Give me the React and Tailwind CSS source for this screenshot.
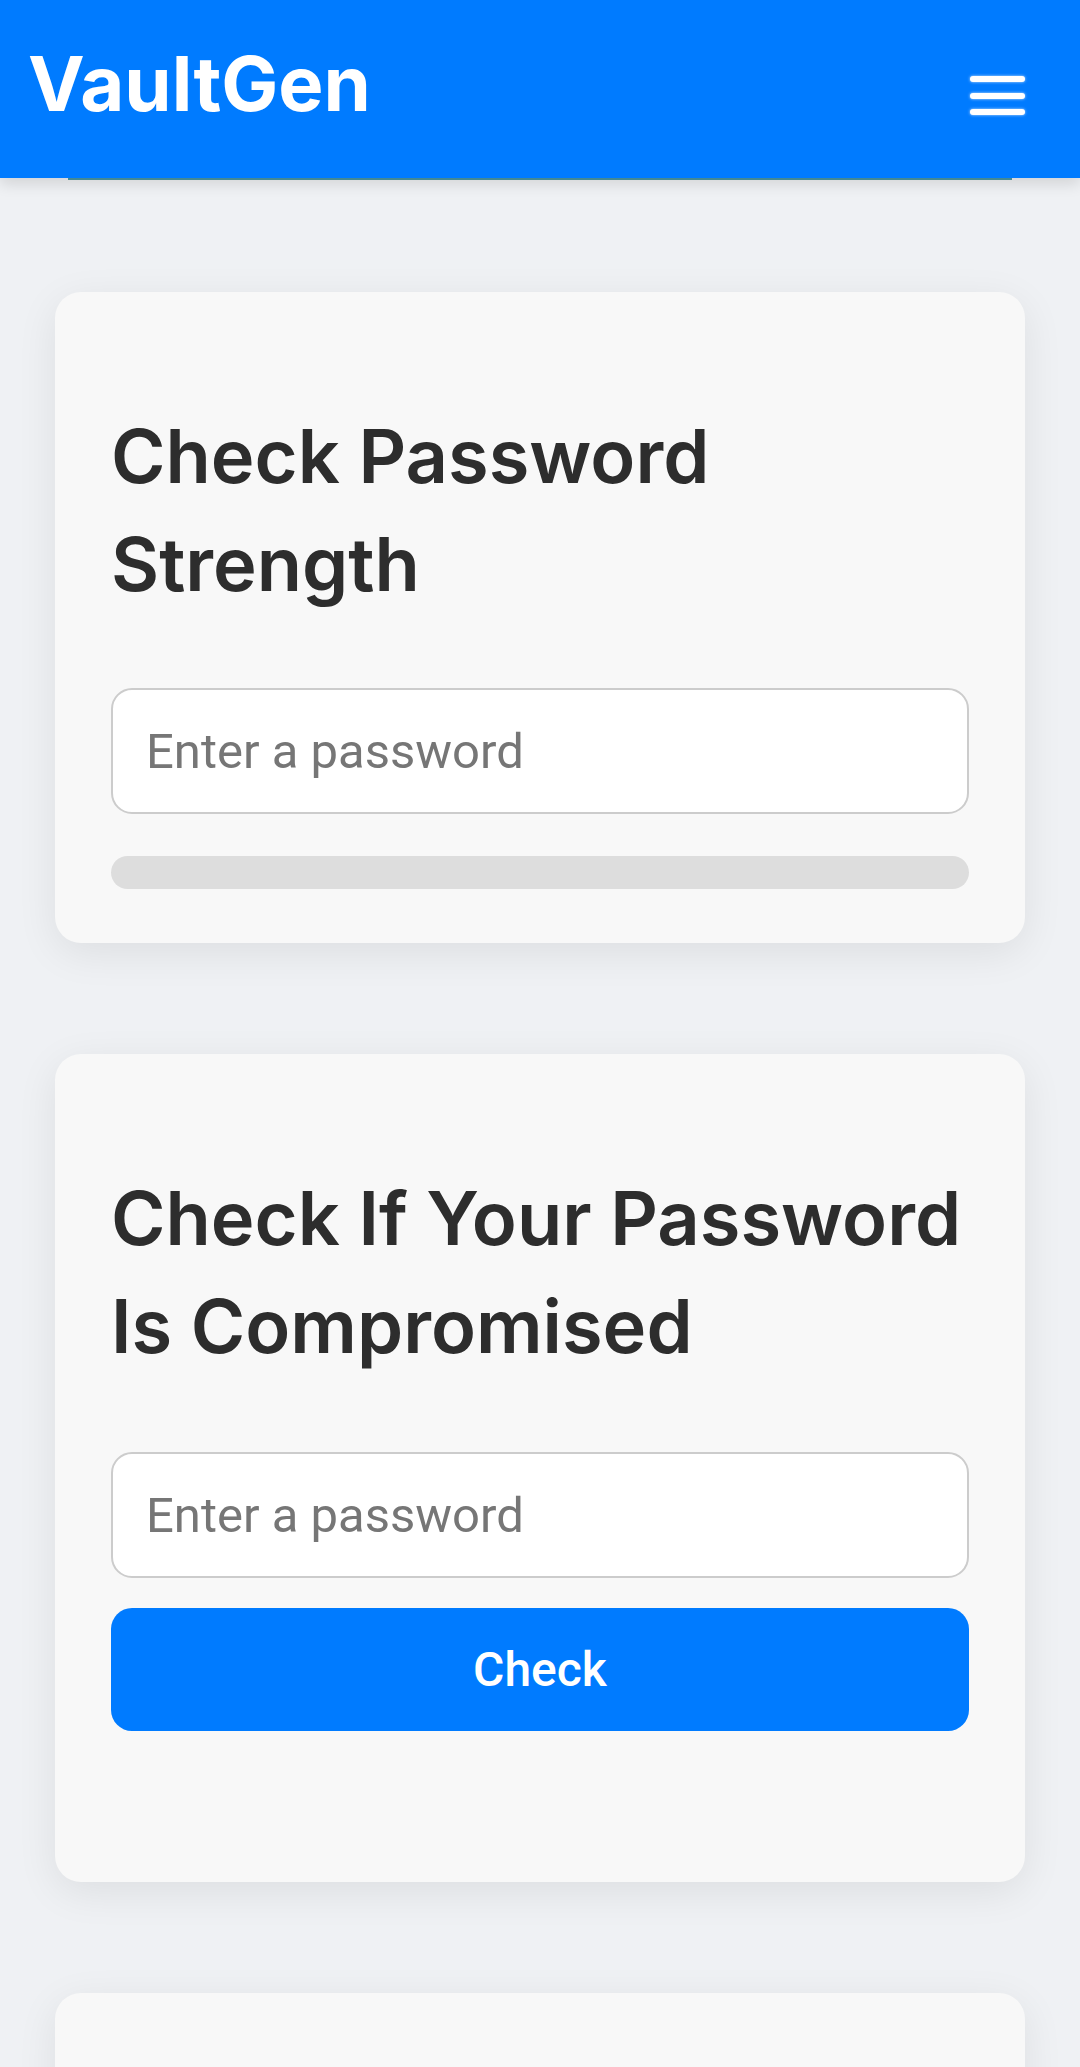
import React from "react";

function Card({ children, className = "" }) {
  return (
    <div
      className={
        "rounded-[26px] bg-[#f8f8f8] px-[56px] shadow-[0_10px_40px_rgba(0,0,0,0.08)] " +
        className
      }
    >
      {children}
    </div>
  );
}

function Heading({ children }) {
  return (
    <h2
      className="text-[74px] leading-[108px] font-semibold text-[#2d2d2d]"
      style={{ fontFamily: "Inter, 'Noto Sans', sans-serif" }}
    >
      {children}
    </h2>
  );
}

function PasswordInput({ className = "" }) {
  return (
    <input
      type="password"
      placeholder="Enter a password"
      className={
        "block w-full h-[126px] rounded-[21px] border-2 border-[#cccccc] bg-white pl-[33px] text-[49px] text-[#333] placeholder:text-[#767676] outline-none " +
        className
      }
      style={{ fontFamily: "Roboto, 'Noto Sans', sans-serif" }}
    />
  );
}

export default function App() {
  return (
    <div className="min-h-screen bg-[#eff1f4]">
      <header className="relative z-10 h-[178px] bg-[#007bff] flex justify-between items-start pl-[28px] pr-[55px] shadow-[0_6px_14px_rgba(0,0,0,0.12)]">
        <div className="pt-[45px]">
          <span
            className="text-[76px] leading-none font-bold text-white"
            style={{ fontFamily: "Inter, 'Noto Sans', sans-serif" }}
          >
            VaultGen
          </span>
        </div>
        <div className="pt-[76px] flex flex-col gap-[10.5px]">
          <div className="w-[55px] h-[6px] rounded-full bg-white shadow-[0_0_3px_rgba(255,255,255,0.8)]" />
          <div className="w-[55px] h-[6px] rounded-full bg-white shadow-[0_0_3px_rgba(255,255,255,0.8)]" />
          <div className="w-[55px] h-[6px] rounded-full bg-white shadow-[0_0_3px_rgba(255,255,255,0.8)]" />
        </div>
      </header>
      <div className="mx-[68px] h-[2px] bg-[#4a97a3]" />
      <main className="px-[55px] pt-[112px] pb-[40px] flex flex-col gap-[111px]">
        <Card className="pt-[110px] pb-[54px]">
          <Heading>
            Check Password
            <br />
            Strength
          </Heading>
          <PasswordInput className="mt-[70px]" />
          <div className="mt-[42px] h-[33px] rounded-full bg-[#dddddd]" />
        </Card>
        <Card className="pt-[110px] pb-[151px]">
          <Heading>
            Check If Your Password
            <br />
            Is Compromised
          </Heading>
          <PasswordInput className="mt-[72px]" />
          <button
            className="mt-[30px] w-full h-[123px] rounded-[21px] bg-[#007bff] text-white text-[48px] font-medium"
            style={{ fontFamily: "Roboto, 'Noto Sans', sans-serif" }}
          >
            Check
          </button>
        </Card>
        <Card className="h-[400px]">
          <div />
        </Card>
      </main>
    </div>
  );
}
